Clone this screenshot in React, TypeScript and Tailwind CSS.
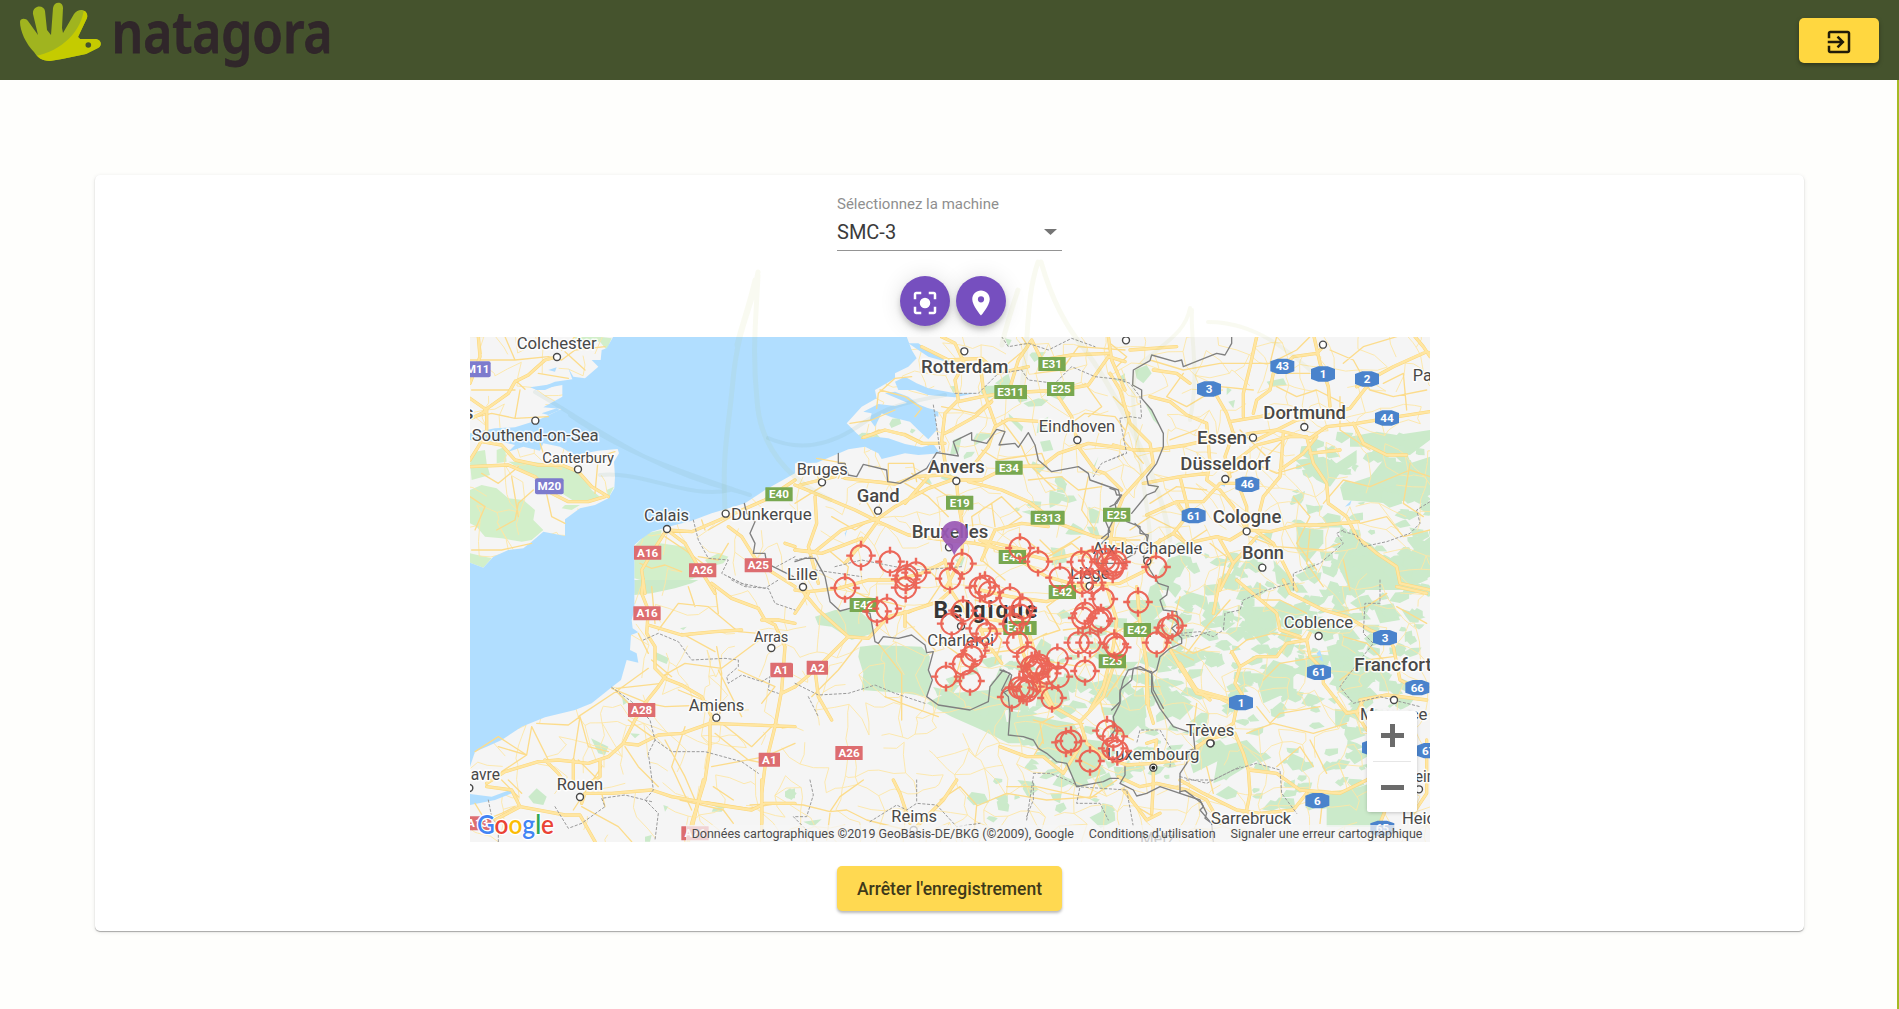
import React from "react";

type Label = [string, number, number, number, number, number];
type Shield = [string, number, number, string, number?];
type Tile = {
  x: number;
  y: number;
  green?: string[];
  water?: string[];
  road?: string;
  motorway?: string;
  border?: string;
  dashed?: string;
  labels?: Label[];
  dots?: [number, number][];
  shields?: Shield[];
};

/* Map sections. Each has an origin on the map and is drawn in thirds of a pixel. */
const tiles: Tile[] = [
  {
    x: 465, y: 330,
    green: [
      "M15 480 50 465 95 475 130 505 175 510 210 540 205 570 235 600 200 630 170 635 110 625 60 620 35 590 15 580Z",
      "M15 670 60 680 80 685 55 713 15 698Z",
      "M15 400 30 365 60 360 65 400 75 435 20 450Z", "M95 360 120 350 125 395 95 400Z",
      "M130 395 200 395 300 408 345 430 380 480 410 505 330 515 290 490 230 460 190 430Z",
      "M300 525 345 525 320 540 290 535Z", "M320 20 400 20 440 25 425 60 405 35 350 35Z", "M425 480 447 470 430 505Z",
      "M508 650 545 610 590 600 585 640 660 650 690 690 700 740 630 765 560 760 508 745Z",
      "M720 690 760 670 790 680 775 700 735 710Z",
    ],
    water: [
      "M445 20 990 20 990 430 900 480 840 520 740 550 680 572 610 590 560 605 525 630 508 645 508 790 15 790 15 698 55 713 85 680 130 660 175 655 200 635 235 605 300 618 300 568 345 535 390 525 430 505 448 475 450 440 447 395 462 370 458 357 400 362 330 375 285 350 235 340 225 362 175 350 130 365 150 345 110 335 15 330 15 310 90 295 150 292 220 270 290 237 235 232 292 200 292 165 210 180 270 155 322 148 310 115 325 140 360 145 400 110 380 90 407 90 410 60 425 55Z",
      "M250 120 275 112 270 125Z", "M195 172 290 158 240 180 215 180Z", "M230 250 275 235 285 240 250 255Z",
    ],
    road: "M15 90 150 90 250 80 290 90 330 60 420 50M150 90 120 20M220 130 310 145M20 180 150 180M150 150 180 178M15 265 80 250 150 265 250 260M165 180 150 265M330 20 290 60M15 120 60 125M300 65 360 120M20 660 110 660 200 640M50 430 100 460 160 410M95 600 150 570 160 520 205 480M140 440 160 560M240 470 260 560 300 580M390 490 400 380 450 365M225 340 235 370M30 600 60 530 15 500M525 700 560 715 600 705 650 725M700 680 760 690 790 640M600 620 660 660 740 720M730 600 800 560M710 570 720 600",
    motorway: "M40 20 45 80 15 160M15 205 65 240 65 300 40 350 15 390M15 410 130 405 210 440 260 490 310 515 370 515 420 500M50 335 110 345 150 390 220 405 290 405 340 425 380 470 430 500M60 240 130 190 150 155 190 135 240 90 276 81M20 265 60 245M606 600 680 605 740 580 820 545 900 510 990 450M606 597 560 670 530 720 540 790M606 600 660 640 700 710 750 790M790 590 830 620 880 700 990 770M960 640 990 650",
    border: "M838 520 845 550 870 575 855 610 870 640 865 670 900 670 905 700 935 715 985 740",
    dashed: "M685 570 700 630 730 685 790 690 770 730 830 760 900 775 940 750M935 710 990 680M790 740 850 770",
    labels: [["Colchester",155,395,57,50,400],["Southend-on-Sea",20,401,332,50,400],["Canterbury",232,447,400,46,400],["Calais",537,672,573,50,400],["Dunkerque",798,1040,571,50,400],["Londres",-180,25,268,54,500]],
    dots: [[276,81],[211,272],[339,418],[606,597],[782,551]],
    shields: [["M11",38,118,"m",78],["M20",253,469,"m",86],["E40",942,493,"e"],["A16",548,668,"a"],["A26",713,721,"a"],["A25",880,706,"a"]],
  },
  {
    x: 795, y: 330,
    green: ["M475 330 500 320 490 370 465 375Z","M600 160 640 130 650 165 625 170Z","M640 250 685 290 680 305 645 270Z","M685 220 730 205 760 210 740 228 700 230Z","M730 275 760 260 750 300 725 310Z","M735 335 765 330 775 360 745 365Z","M790 455 815 460 810 490 785 485Z","M880 530 915 545 910 580 885 580Z","M680 545 705 540 710 555Z","M480 690 510 680 500 710Z","M960 150 990 130 990 160Z","M895 410 910 380 890 440Z","M630 25 650 30 640 50Z"],
    water: [
      "M0 20 335 20 350 60 365 85 340 110 300 130 300 145 240 180 245 205 200 230 155 280 185 310 205 328 240 320 280 325 330 342 380 352 415 342 435 370 370 375 330 370 260 387 250 370 210 350 160 358 120 375 65 398 0 400Z",
      "M205 245 250 222 300 228 350 215 400 235 420 240 425 300 400 328 370 300 345 275 290 262 260 250 240 290 225 270 230 250Z",
      "M300 155 330 140 365 160 400 175 480 190 540 190 480 202 400 195 360 180 310 180Z",
      "M270 190 300 185 340 200 380 230 430 245 430 260 380 245 330 215Z",
      "M340 40 370 40 420 75 480 90 470 100 400 80Z",
      "M150 610 158 595 150 620Z",
    ],
    road: "M245 235 250 190 300 145 350 140M255 180 330 200 380 235 360 260M165 280 230 270 300 240M200 325 250 300 330 310 400 345M130 445 150 400 65 385M280 455 280 400 355 400 365 455M0 520 80 470 60 420M140 445 270 455M110 560 180 600 240 560 200 490M330 460 400 500 460 560M350 430 430 480 520 540M560 360 610 390 740 370 760 420M620 270 680 350 700 400 780 480M540 640 530 560 620 500 680 560 620 600M800 300 870 250 960 260 990 300M870 160 920 230 880 260M720 130 800 120 850 50 990 60M440 230 540 250 600 200M640 100 700 50 680 20M680 620 760 680 830 640 900 700M880 440 860 540 900 600M700 450 800 440 850 480 920 470M590 520 600 590",
    motorway: "M0 465 60 490 180 540 260 580 340 615 450 630 540 640 660 665 760 690 990 640M0 660 60 665 140 600 250 565 300 530 400 475 484 445M15 465 75 450 120 440M150 445 300 462 360 440 440 435 484 445M484 445 490 520 505 600 500 680 450 780M505 500 500 550M484 450 560 450 640 410 740 408 790 370 880 340 990 355M520 455 620 480 700 515 790 580 900 620 990 630M470 420 540 400 580 350 600 290 640 268 740 275 790 300M455 430 440 330 450 250 490 210 480 150 508 100 480 40 440 20M490 215 560 200 620 190 800 180 880 165 940 80 990 95M555 90 565 180 600 280M640 190 670 90 710 30 740 90 830 75 940 70M790 200 830 260 850 350 900 420 930 430 980 480M450 310 540 260 590 215M380 50 460 90 560 85 610 130 700 110M205 322 270 300 330 315 380 340 450 340M60 500 65 580 40 650 70 760M400 440 330 520M560 690 600 600 680 580 760 590M940 20 950 90 990 180M250 570 200 640 150 700",
    border: "M130 370 130 400 150 400 160 435 185 440 205 403 275 420 278 455 315 460 395 415 425 368 490 378 475 335 530 308 530 330 575 340 605 298 630 305 612 345 660 340 670 352 700 308 720 345 730 390 770 425 850 410 880 430 885 450 970 480 975 500 960 520 965 545 930 570 945 605 920 625",
    dashed: "M415 225 425 290 435 365M480 190 550 190 610 130 680 120 700 150 780 160 830 110 900 140 990 150M620 20 640 50 700 40 760 60 830 25 900 50M895 440 920 400 990 370M0 690 50 680M60 720 200 740",
    labels: [["Rotterdam",378,640,128,56,500],["Eindhoven",731,961,306,50,400],["Bruges",5,158,434,48,400],["Anvers",398,569,428,56,500],["Gand",185,314,516,56,500],["Bruxelles",350,580,624,56,500]],
    dots: [[508,64],[847,330],[81,457],[484,453],[249,542],[462,652]],
    shields: [["E31",771,102,"e"],["E311",647,186,"e",98],["E25",797,177,"e"],["E34",642,413,"e"],["E19",494,518,"e"],["E313",758,563,"e",102],["E40",652,681,"e"]],
  },
  {
    x: 1110, y: 330,
    green: ["M75 120 110 105 125 130 100 160 80 145Z","M470 155 520 145 530 165 480 170Z","M105 220 125 240 150 290 130 270Z","M355 215 375 210 370 235Z","M350 170 365 180 350 195Z","M720 320 800 305 860 315 960 300 960 330 900 375 820 370 760 350 720 350Z","M555 390 640 380 680 400 740 360 740 400 690 430 660 470 620 450Z","M820 390 900 400 960 380 960 480 900 510 830 520 700 510 690 470 780 440Z","M560 590 640 600 640 640 590 700 560 660Z","M700 610 780 640 820 680 870 690 960 620 960 740 880 780 720 780 680 700Z","M490 690 540 740 550 780 500 760Z","M440 620 490 600 480 640Z","M180 680 220 690 200 740 175 780 130 780 150 720Z"],
    water: ["M705 530 725 510 720 525Z","M335 455 345 450 345 470 330 465Z","M430 630 437 625 440 640Z"],
    road: "M0 40 50 80 20 110M120 90 220 120 330 100 480 100 560 60 600 20M480 100 500 20M220 130 170 200 230 230 330 170 430 180M500 170 560 200 620 180 700 220M700 100 760 50 860 20M660 60 730 90 780 180 850 200 950 180M820 160 880 130 890 240M300 400 360 430 430 400 500 430 600 400M120 520 200 470 290 480M60 600 120 560 200 600 230 640 290 600M300 640 350 680 330 780M420 620 500 650 640 660 690 640M640 520 700 450 780 470 900 420 960 440M750 580 830 560 880 620 960 600M550 500 600 560 560 640 620 720M700 690 720 780M900 400 880 520 940 560M180 330 260 300 330 330M390 300 470 380 520 330M500 130 600 130M600 600 590 700 640 770M10 200 60 250 40 330 100 400M690 200 690 300 780 360",
    motorway: "M440 20 420 110 400 190 400 260M120 200 180 215 230 255 290 280 300 400 290 450 330 480 370 530 410 600M310 180 350 250 370 310 345 380 360 440M360 275 450 260 540 240 620 260 720 235 770 170M430 250 440 210 480 180 490 130 550 80 620 70 640 50M612 20 630 100 655 170 660 230M345 330 420 310 500 300 600 325 650 290 740 280 830 265 960 245M440 330 560 270 620 260M380 390 440 345 540 320 590 320M520 310 515 380 510 440 460 500 440 580M510 420 580 370 620 320M590 320 610 400 650 460 655 520 710 560 740 620 800 670 860 710 870 760 960 780M730 280 760 340 830 375 890 375M740 170 850 110 950 65 960 70M915 20 940 50 960 80M410 600 480 605 560 585 640 585 745 575M440 605 490 640 520 700 560 780M410 600 360 630 320 620 230 640 190 610M120 650 190 610 230 560 200 515 280 515 330 460 440 460M60 60 200 50M100 460 210 440 290 430M210 440 240 560M10 345 70 360 130 360 230 345 340 320M0 130 30 180 60 280 120 340 130 400 40 500 20 550M325 620 370 700 330 780M370 700 440 620M110 555 200 515M600 370 690 360M130 120 200 130 240 160M380 450 410 530 410 600",
    border: "M365 20 365 40 345 75 320 70 220 110 215 90 195 95 125 75 120 92 70 120 68 165 95 180 95 205 125 240 160 310 160 350 140 400 110 440 115 465 145 470 135 485 110 495 65 550M0 475 15 480 20 495 35 495 20 520 0 530M50 575 90 590 90 610 115 615 110 640 80 650 75 670 40 690",
    dashed: "M30 265 60 260 95 265 90 200 60 160 30 150M30 270 50 370 0 390M700 605 740 615 760 650 830 635 900 610 930 580 920 540 960 515M700 600 680 610 700 640 630 700 550 730 550 780",
    labels: [["Dortmund",460,708,266,56,500],["Essen",261,411,343,56,500],["Düsseldorf",211,482,421,56,500],["Cologne",308,514,578,56,500],["Bonn",396,522,687,56,500],["Paderborn",908,1135,154,50,400]],
    dots: [[48,31],[639,44],[583,291],[429,323],[346,447],[410,604],[457,713]],
    shields: [["43",517,109,"b"],["1",639,132,"b"],["2",771,147,"b"],["3",297,177,"b"],["44",831,264,"b"],["46",412,463,"b"],["61",251,557,"b"],["E25",20,554,"e"]],
  },
  {
    x: 465, y: 580,
    green: ["M508 0 700 0 680 10 630 25 560 40 508 45Z","M570 215 612 235 605 252 575 240Z","M190 650 215 625 245 650 235 675 205 670Z","M378 475 430 500 420 525 400 520Z","M495 460 525 462 510 475Z","M470 345 490 365 475 375Z","M745 685 780 680 770 695 740 695Z","M960 635 990 625 990 655 965 655Z","M540 770 560 765 555 785 540 785Z","M645 145 665 140 655 150Z","M595 675 610 680 600 695Z"],
    water: [
      "M0 0 508 0 508 90 500 120 503 145 520 157 498 165 495 210 515 220 520 248 485 240 468 300 440 322 380 370 330 390 240 412 170 440 110 480 70 498 30 515 15 560 0 560Z",
      "M15 642 80 650 140 628 150 636 90 660 15 675Z",
    ],
    road: "M30 515 100 470 185 525 110 575M100 500 185 525 200 440M200 440 250 540M215 430 310 435 345 410 325 540M345 410 370 500 430 515M440 325 550 370 600 380 730 375M455 325 590 310M340 410 460 330 550 265M450 330 520 400M520 160 550 220M580 150 640 70 730 80 820 155 880 160M620 290 560 240M590 290 660 250 770 265 890 175M755 200 770 280 765 400M830 410 760 270M650 160 750 215M740 370 640 330M480 500 520 560 580 620M600 480 660 590 690 660M560 470 490 420M680 690 620 560 660 440M750 460 850 540 900 550M740 560 900 530 990 490M680 660 760 670 850 685 940 670M160 650 110 600M30 670 60 720 110 700 150 680M350 680 460 740 500 785M420 680 400 600 340 540M410 560 325 690M560 20 570 130M690 80 670 20M770 430 860 500 930 430M890 370 930 320 820 270M750 20 760 100M130 600 170 640",
    motorway: "M535 0 530 40 550 90 545 160 570 200 570 265 600 295 650 315 710 350 740 410 735 430 650 460 580 465 520 495 475 490 430 530 370 550 280 540 220 545 120 575 65 610M740 430 990 440M735 430 735 500 720 600 680 730 670 785M600 290 580 320 540 370 510 420 475 490M65 620 140 630 165 680 300 705 345 705 390 785M350 670 360 640 440 640 560 630 620 650M740 10 800 55 880 85 900 120 930 135 960 200 950 330 930 440 900 560 890 640 890 730M890 120 940 120 990 130M325 540 325 600M405 540 405 590 370 610M240 540 280 580 300 610M550 135 650 165 750 155 830 150M620 650 760 675 860 690 900 670 990 670M950 340 990 320M165 680 90 720",
    dashed: "M535 180 580 160 640 185 680 240 780 235 820 240 820 260 785 290 790 310 830 285 890 305 915 290 910 330 940 340M440 322 500 365 555 420 570 480 620 515 720 515 830 545 880 580M570 480 550 520 565 630 540 660 580 700 570 780M70 660 80 710 100 740 100 785M270 680 310 745 350 730 420 680 410 655 480 645 560 665M800 0 840 20 910 25 930 70 990 90",
    labels: [["Arras",867,970,185,46,400],["Amiens",671,838,392,52,400],["Rouen",275,414,629,52,400],["Le Havre",-78,105,601,50,400]],
    dots: [[919,204],[754,413],[345,651],[13,624]],
    shields: [["A16",546,100,"a"],["A28",530,390,"a"],["A1",951,271,"a",66],["A1",913,539,"a",64],["A13",38,730,"a"],["A26",690,760,"a"],["A26",1152,519,"a"]],
  },
  {
    x: 795, y: 530,
    green: ["M60 260 120 240 190 240 230 275 235 310 170 330 110 290 70 285Z","M195 350 240 345 380 350 405 380 400 420 410 460 395 500 330 490 200 480 205 430 190 380Z","M395 520 430 500 470 490 580 480 590 455 620 430 645 440 620 500 640 600 700 640 640 640 560 600 470 560Z","M555 390 620 375 620 400 580 415Z"],
    road: "M100 60 160 110 150 170 210 200 330 230M380 100 440 160 400 220 340 250M50 500 130 420 200 330M320 570 320 430 250 340M270 500 320 520 430 560M430 330 500 380 470 480M560 250 620 330 600 400M330 270 420 360M560 90 630 150M620 230 540 210",
    motorway: "M0 180 40 185 130 175 220 150 300 150 380 130 450 95M20 180 70 240 160 320 220 325 280 260 340 245 430 215 470 180 450 90M470 185 520 260 600 270 690 290M160 320 60 420 70 500 110 570M0 60 80 70 200 25M40 190 0 250M560 30 690 60M60 420 0 470M330 245 330 290M540 250 570 330 620 400",
    border: "M0 95 30 85 60 85 90 140 105 215 135 243 165 235 225 250 240 335 250 340 265 320 310 325 350 315 390 345 395 368 415 365 400 420 412 450 395 500 430 525 525 540 580 515 585 470 625 420 650 435 640 480 620 490",
    dashed: "M0 460 70 495 160 490 240 465 300 490 390 520M40 500 70 560M120 110 200 90 300 110 380 120 500 110",
    labels: [["Lille",-24,67,150,48,400],["Charleroi",397,597,347,50,400]],
    dots: [[24,171],[498,289]],
    shields: [["E42",205,225,"e"],["A2",67,413,"a",64],["A1",-42,419,"a",64]],
  },
  {
    x: 980, y: 520,
    green: ["M510 200 530 190 560 260 520 300 480 310 450 280 440 240 500 240Z","M570 120 620 130 600 170 560 180Z","M320 20 350 20 360 50 340 55Z","M20 540 60 440 100 480 150 570 10 570Z","M170 500 260 480 270 540 200 560Z","M380 460 450 470 420 550 380 540Z","M610 210 680 230 690 280 640 250Z"],
    road: "M280 200 200 260 240 330 180 350M250 330 330 320 400 340 480 300M530 330 640 400 690 380M400 350 440 440 380 530M560 380 640 420M600 230 570 340M180 420 300 440 350 400M20 400 100 390 200 340M400 60 480 60M180 60 220 100 300 50",
    motorway: "M0 60 100 110 200 170 290 195 420 190 500 150 540 60M0 210 90 230 200 245 330 200M380 200 410 300 400 380 370 500 330 570M470 200 480 310 500 430 500 550M110 300 130 400 160 480 220 570M560 370 600 440 640 500 690 540M0 330 100 330M400 0 390 80 350 180M160 380 130 290 60 280",
    border: "M465 10 500 50 505 80 490 110 510 150 535 190 565 200 560 225 540 240 550 270 590 275 595 310 575 325 605 355 605 370 570 385 540 410 530 450 515 460M400 0 385 30 385 50 355 80 350 130 440 130M515 460 480 440 460 445 455 480 420 510 420 545 395 570M515 460 520 510 550 565",
    dashed: "M605 345 640 350 690 335",
    labels: [["Aix-la-Chapelle",338,667,102,48,400],["Liège",270,388,178,48,400]],
    dots: [[502,123],[329,198]],
    shields: [["E42",247,216,"e"],["E42",472,330,"e"],["E411",120,324,"e",100],["E25",397,424,"e"]],
  },
  {
    x: 1000, y: 640,
    green: ["M25 210 110 230 220 250 250 300 320 400 230 430 190 370 130 345 90 300 25 285Z","M340 200 430 140 440 230 380 290 330 280Z","M460 180 530 150 580 200 540 240 500 220Z","M560 330 660 300 700 340 580 400Z"],
    road: "M300 180 320 260 400 300M250 250 170 260 100 240M100 350 130 300M130 310 120 250 160 230M270 470 300 390 200 340M200 460 270 475 350 420M590 190 580 270M380 450 410 500 460 530M640 270 560 370M400 140 480 140M20 440 110 440 200 460",
    motorway: "M0 320 80 350 130 350 190 400 240 320M110 100 160 200 240 245 310 170 350 50M240 245 260 310 310 350 380 375 460 370 460 430 455 520M460 370 540 360 620 300 690 280M460 370 470 300 440 310M440 90 445 200 460 250M540 70 590 150 700 180M355 410 420 440 470 430 560 450 620 480 660 550M370 450 410 500 440 540 480 520",
    border: "M0 90 30 100 20 120 5 150 25 170 30 220 25 285 70 290 100 300 115 325 140 340 170 365 200 370 215 405 230 440 310 425 330 415 355 415M405 85 385 90 370 120 360 160 360 190 340 230 345 270 330 290M455 95 405 85M375 380 375 405 360 430 400 450 410 468 440 460 480 440 540 460 540 400 560 370 570 330 585 330 580 280 520 260 480 205 455 155 455 100M540 460 600 480 610 500 600 510 630 545",
    dashed: "M100 400 150 400 200 420 240 440 230 490 300 490 325 540M230 440 380 450 400 560M510 380 515 330 480 270 420 270 410 310M560 420 640 420 720 380M80 540 100 410",
    labels: [["Luxembourg",320,598,360,50,400],["Trèves",557,703,288,50,400],["Metz",420,525,612,52,400]],
    dots: [[460,383],[632,310]],
  },
  {
    x: 1180, y: 580,
    green: ["M200 80 290 80 290 150 240 180 190 150Z","M440 200 510 180 540 220 620 260 520 370 470 330Z","M280 240 340 260 340 330 250 370 230 300Z","M120 500 200 480 250 530 150 590 100 610Z","M440 640 540 620 600 600 620 660 600 740 440 740Z","M580 80 640 70 660 120 600 130Z","M180 280 270 280 230 310Z","M60 210 120 220 100 260Z","M370 110 430 110 400 130Z"],
    water: ["M410 220 420 210 430 245 420 240Z"],
    road: "M240 10 240 60 300 60 380 100M20 220 80 140 150 60M150 220 200 180 280 160 380 180M230 380 270 430 300 400 420 380M420 230 300 250 250 300M200 460 280 430 400 460 500 430M290 560 360 500 400 560M390 480 440 580M430 640 420 730M100 640 80 560M480 300 560 240 640 230M460 100 560 80 620 40M650 80 740 130M490 170 560 190 610 240",
    motorway: "M0 260 50 340 120 355 170 380 160 430 100 470 50 500 30 520M155 215 180 260 165 310 190 350M180 260 230 230 290 230 320 190 380 180 390 160M430 90 330 40 310 0M120 0 100 100M380 180 390 230 430 270 430 310 500 400 550 390 540 360 620 345 740 360M430 90 500 110 570 150 620 170 640 200 660 300 700 320M165 460 190 520 205 570 290 580 360 630 480 640 560 600 620 560M205 570 210 640 200 690M380 640 340 690 240 700 170 690 70 640 0 600M550 360 530 400 560 450M650 20 740 40M170 0 230 50 290 100 300 150 360 170M740 480 740 640 700 700M600 730 620 680",
    border: "M0 635 15 632 40 650 65 670 80 700 75 715 95 730 100 785",
    dashed: "M0 160 60 155 100 170 130 150 135 100 180 90 190 60 260 30 330 10M600 0 600 70 555 70 550 160 580 190 540 240 480 320 520 370 600 350 720 380M0 590 80 610 160 570 230 550 300 570 305 640 350 700",
    labels: [["Coblence",311,519,144,50,400],["Francfort",523,755,273,54,500],["Mayence",540,742,420,48,400],["Mannheim",566,780,606,48,400],["Heidelberg",666,905,733,48,400],["Sarrebruck",93,334,733,50,400]],
    dots: [[416,168],[642,360],[91,490],[717,628]],
    shields: [["3",615,173,"b"],["61",417,277,"b"],["66",712,323,"b"],["1",183,368,"b"],["6",412,662,"b"],["65",607,745,"b"],["67",746,512,"b"],["",582,503,"b"]],
  },
  {
    x: 680, y: 780,
    green: ["M315 35 330 25 350 40 335 60 315 50Z","M950 65 970 52 988 75 985 95 955 90Z","M1012 0 1060 5 1075 30 1030 20Z","M1110 40 1145 40 1140 70 1120 60Z","M95 75 135 75 130 90Z","M370 125 425 118 400 140Z"],
    road: "M0 60 130 90 160 130M210 75 300 70 370 75 450 95 500 90 560 120 680 150M450 95 480 50 550 0M450 100 440 180M780 60 840 20 890 75 880 180M890 78 980 40 1100 60 1250 50M160 60 100 20",
    motorway: "M70 0 30 170M245 0 245 170M640 0 660 40 690 130M700 150 790 60 830 0",
    dashed: "M390 0 400 45 380 110 340 110 390 160M570 125 650 75 680 90 710 70 770 75 830 140 900 130M710 0 710 70M1060 10 1060 60 1040 110",
    labels: [["Reims",634,771,125,50,400]],
    dots: [[701,150]],
  },
];

const crosshairs: [number, number][] = (
  [
    [795,530,[[198,77],[285,95],[150,174],[336,137],[332,148],[363,128],[332,173],[246,244],[276,236],[501,101],[465,146],[504,242],[470,281],[555,173],[570,168],[583,187],[645,204],[555,295],[575,311],[540,362],[530,380],[505,402],[453,440],[525,453]]],
    [980,520,[[120,84],[174,125],[240,173],[304,126],[338,122],[375,118],[385,130],[400,136],[408,126],[398,145],[307,188],[335,188],[370,237],[474,246],[528,141],[315,280],[308,294],[355,303],[363,296],[127,264],[120,285],[100,312],[295,368],[330,368],[403,372],[410,382],[530,368],[565,323],[577,317],[112,368],[142,410],[232,415],[315,453],[235,470],[216,534],[95,531],[118,503],[140,513],[130,508],[155,440],[165,437],[172,448],[178,435],[160,455],[200,460],[150,500]]],
    [1000,640,[[198,307],[213,303],[270,363],[321,272],[340,289],[338,325],[352,333]]],
  ] as [number, number, [number, number][]][]
).flatMap(([ox, oy, list]) => list.map(([x, y]) => [ox + x / 3, oy + y / 3] as [number, number]));

/* Small seeded generator so that the background network is the same on every render. */
function makeRandom(seed: number) {
  let s = seed;
  return () => {
    s = (s * 1664525 + 1013904223) % 4294967296;
    return s / 4294967296;
  };
}

function localRoads() {
  const r = makeRandom(7);
  const step = 20;
  const cols = 50;
  const rows = 27;
  const pts: [number, number][][] = [];
  for (let j = 0; j < rows; j++) {
    pts.push([]);
    for (let i = 0; i < cols; i++) pts[j].push([462 + i * step + (r() - 0.5) * 16, 330 + j * step + (r() - 0.5) * 16]);
  }
  let d = "";
  const link = (a: [number, number], b: [number, number]) => {
    const mx = (a[0] + b[0]) / 2 + (r() - 0.5) * 7;
    const my = (a[1] + b[1]) / 2 + (r() - 0.5) * 7;
    d += `M${a[0].toFixed(1)} ${a[1].toFixed(1)}L${mx.toFixed(1)} ${my.toFixed(1)}L${b[0].toFixed(1)} ${b[1].toFixed(1)}`;
  };
  for (let j = 0; j < rows - 1; j++)
    for (let i = 0; i < cols - 1; i++) {
      const dense = pts[j][i][0] > 860 ? 0.56 : 0.36;
      if (r() < dense) link(pts[j][i], pts[j][i + 1]);
      if (r() < dense) link(pts[j][i], pts[j + 1][i]);
      if (r() < 0.12) link(pts[j][i], pts[j + 1][i + 1]);
    }
  return d;
}

function woods() {
  const r = makeRandom(21);
  const areas = [
    [1370, 500, 80, 75, 75], [1280, 690, 130, 130, 190], [1100, 730, 110, 60, 80], [1100, 660, 90, 60, 35],
    [1200, 600, 60, 60, 30], [1360, 610, 80, 60, 55], [1000, 690, 60, 35, 20], [1000, 460, 150, 110, 22], [1060, 800, 90, 30, 14],
  ];
  let d = "";
  for (const [cx, cy, rx, ry, n] of areas)
    for (let k = 0; k < n; k++) {
      const a = r() * 6.283;
      const q = Math.sqrt(r());
      const x = cx + Math.cos(a) * rx * q;
      const y = cy + Math.sin(a) * ry * q;
      const size = 3 + r() * 7;
      const m = 5;
      for (let v = 0; v < m; v++) {
        const t = (v / m) * 6.283 + r() * 0.9;
        const l = size * (0.45 + r() * 0.9);
        d += `${v ? "L" : "M"}${(x + Math.cos(t) * l * 1.3).toFixed(1)} ${(y + Math.sin(t) * l * 0.85).toFixed(1)}`;
      }
      d += "Z";
    }
  return d;
}

const LOCAL = localRoads();
const WOODS = woods();
const shieldColor: Record<string, string> = { m: "#7d7bcd", e: "#78a850", a: "#dd6d70", b: "#4a83cc" };

function layer(render: (t: Tile) => React.ReactNode) {
  return tiles.map((t, i) => (
    <g key={i} transform={`translate(${t.x} ${t.y}) scale(.33333)`}>{render(t)}</g>
  ));
}

function ShieldMark({ s }: { s: Shield }) {
  const [name, x, y, kind, w = kind === "b" ? 72 : 82] = s;
  const c = shieldColor[kind];
  return (
    <g>
      {kind === "b" ? (
        <path d={`M${x - 36} ${y - 15}L${x - 14} ${y - 23}H${x + 14}L${x + 36} ${y - 15}V${y + 15}L${x + 14} ${y + 23}H${x - 14}L${x - 36} ${y + 15}Z`} fill={c} />
      ) : (
        <rect x={x - w / 2} y={y - (kind === "m" ? 24 : 21)} width={w} height={kind === "m" ? 48 : 42} rx={kind === "m" ? 6 : 1} fill={c} />
      )}
      <text x={x} y={y + 12.5} textAnchor="middle" fontSize="35" fontWeight="700" fill="#fff">{name}</text>
    </g>
  );
}

function MapCanvas() {
  return (
    <svg className="block h-[505px] w-[960px]" viewBox="470 337 960 505" fontFamily="Roboto, sans-serif">
      <rect x="470" y="337" width="960" height="505" fill="#f5f5f5" />
      {layer((t) => t.green?.map((d, i) => <path key={i} d={d} fill={t.x < 600 && t.y < 400 ? "#d2efca" : "#cbeaca"} />))}
      <path d={WOODS} fill="#cbeacb" />
      <path d={LOCAL} fill="none" stroke="#fde6a6" strokeWidth="0.9" strokeLinejoin="round" />
      {layer((t) => t.water?.map((d, i) => <path key={i} d={d} fill="#b1deff" />))}
      <g fill="none" strokeLinejoin="round" strokeLinecap="round">
        {layer((t) => <path d={t.road} stroke="#fcdc8c" strokeWidth="4" />)}
        {layer((t) => <path d={t.motorway} stroke="#fbd67a" strokeWidth="10" />)}
        {layer((t) => <path d={t.motorway} stroke="#ffe6a2" strokeWidth="7" />)}
        {layer((t) => <path d={t.dashed} stroke="#9a9a9a" strokeWidth="3" strokeDasharray="7 7" />)}
        {layer((t) => <path d={t.border} stroke="#808080" strokeWidth="4" />)}
      </g>
      {layer((t) => t.dots?.map(([x, y], i) => <circle key={i} cx={x} cy={y} r="10.5" fill="#fff" stroke="#484848" strokeWidth="4.2" />))}
      <circle cx="1153.3" cy="767.7" r="2" fill="#222" />
      {layer((t) => t.shields?.map((s, i) => <ShieldMark key={i} s={s} />))}
      {layer((t) =>
        t.labels?.map(([text, x0, x1, y, size, weight]) => (
          <text key={text} x={x0} y={y} textLength={x1 - x0} lengthAdjust="spacingAndGlyphs" fontSize={size} fontWeight={weight} fill="#484848" stroke="#fff" strokeWidth="9" strokeLinejoin="round" paintOrder="stroke" strokeOpacity=".85">
            {text}
          </text>
        ))
      )}
      <text x="933.5" y="618" fontSize="23" fontWeight="700" textLength="104" fill="#363636" stroke="#fff" strokeWidth="3" strokeOpacity=".7" paintOrder="stroke">Belgique</text>
      <g fill="none" stroke="#eb5c4e" strokeWidth="2" opacity=".93">
        {crosshairs.map(([x, y], i) => (
          <g key={i} transform={`translate(${x} ${y})`}>
            <circle r="10.500" />
            <path d="M0-14.800V-7.800M0 14.800V7.800M-14.800 0H-7.800M14.800 0H7.800" strokeWidth="2.400" />
          </g>
        ))}
      </g>
      <path fillRule="evenodd" d="M954.7 521c-7.5 0-13.4 5.8-13.4 13 0 8.700 10 12 13 21.500 3-9.500 13.800-12.800 13.800-21.500 0-7.200-5.900-13-13.400-13zm0 9.200a4.200 4.200 0 1 1 0 8.400 4.200 4.200 0 0 1 0-8.400z" fill="#9a58b5" fillOpacity=".93" />
    </svg>
  );
}

function Watermark() {
  return (
    <svg className="pointer-events-none absolute inset-0 h-full w-full" viewBox="95 175 1709 756" fill="none" strokeLinecap="round">
      <g stroke="#a5b93c" strokeOpacity=".07">
        <path strokeWidth="5" d="M758 272C752 310 738 325 733 380S722 450 725 510M758 275C756 320 752 350 757 400 760 450 790 480 830 500M755 280C748 310 740 330 737 345" />
        <path strokeWidth="5" d="M1038 262C1025 300 1030 340 1020 400M1041 262C1052 300 1065 325 1085 350S1160 470 1170 540M1018 290C1008 320 1005 330 1002 345" />
        <path strokeWidth="4" d="M1190 308C1185 335 1160 345 1140 365S1150 500 1150 540M1192 310C1190 340 1200 370 1190 420M1208 322C1240 322 1270 334 1310 370" />
      </g>
      <g stroke="#6fa08b" strokeOpacity=".1" strokeWidth="4">
        <path d="M535 392C600 430 650 470 740 492M570 415C620 450 660 465 750 495M600 475C640 470 690 500 730 490M768 438C800 452 830 446 860 425S910 402 945 395" />
      </g>
    </svg>
  );
}

function Logo() {
  return (
    <svg className="h-20 w-[345px]" viewBox="0 0 345 80" role="img">
      <defs>
        <clipPath id="hand">
          <path d="M20 22C20 18 26 18 28 21L38 35 33 14C32 5 44 4 45 11L47 30 51 35 53 8C54 1 63 1 63 8L62 28 63 33 74 14C79 7 89 10 87 18L78 37 80 39 96 39C102 40 102 46 98 48L86 54 62 59 50 61C42 61 37 57 34 52 26 44 20 31 20 22Z" />
        </clipPath>
      </defs>
      <g clipPath="url(#hand)">
        <path d="M15 0H105V65H15Z" fill="#a0b41f" />
        <path d="M84 8C82 31 62 51 35 56V66H106V8Z" fill="#c5cb00" />
      </g>
      <circle cx="88.300" cy="45" r="2.800" fill="#45532d" />
      <text x="111.500" y="53" textLength="221" lengthAdjust="spacingAndGlyphs" fontFamily="'Noto Sans', sans-serif" fontSize="57" fontWeight="600" fill="#30262a" stroke="#30262a" strokeWidth=".8">natagora</text>
    </svg>
  );
}

export default function App() {
  return (
    <div className="flex h-[1009px] w-full flex-col overflow-hidden bg-[#fefefc] font-[Roboto,sans-serif]">
      <header className="flex h-20 shrink-0 items-center justify-between bg-[#45532d] pr-5">
        <Logo />
        <button className="mt-[1px] flex h-[45px] w-20 items-center justify-center rounded-[5px] bg-[#ffd740] shadow-[0_2px_4px_rgba(0,0,0,.35)]">
          <svg className="mt-[3px] size-[30px]" viewBox="0 0 24 24" fill="#201b08">
            <path d="M10.090 15.590L11.500 17l5-5-5-5-1.410 1.410L12.670 11H3v2h9.670l-2.580 2.590zM19 3H5c-1.110 0-2 .9-2 2v4h2V5h14v14H5v-4H3v4c0 1.100.89 2 2 2h14c1.100 0 2-.9 2-2V5c0-1.100-.9-2-2-2z" />
          </svg>
        </button>
      </header>
      <main className="flex-1 border-r-2 border-[#a5ba24] pl-[95px] pr-[93px] pt-[95px]">
        <section className="relative flex h-[756px] flex-col items-center rounded-[5px] bg-white shadow-[0_1px_1px_rgba(0,0,0,.3),0_1px_4px_rgba(0,0,0,.1)]">
          <div className="mt-[20px] flex h-[56px] w-[225px] flex-col border-b border-[#949494]">
            <label className="text-[15px] leading-[18px] text-[#8f8f8f]">Sélectionnez la machine</label>
            <div className="mt-[8px] flex items-center justify-between pr-[5px] text-[20px] leading-[23px] text-[#3b3b3b]">
              <span>SMC-3</span>
              <svg className="-mt-px h-[6px] w-[13px]" viewBox="0 0 13 6"><path d="M0 0H13L6.500 6Z" fill="#757575" /></svg>
            </div>
          </div>
          <div className="ml-1.5 mt-[25px] flex gap-1.5">
            <button className="flex size-[50px] items-center justify-center rounded-full bg-[#764fbf] shadow-[0_4px_6px_-1px_rgba(0,0,0,.25),0_1px_22px_rgba(0,0,0,.12)]">
              <svg className="mt-[3px] size-[30px]" viewBox="0 0 24 24" fill="#fff">
                <path d="M5 15H3v4c0 1.100.9 2 2 2h4v-2H5v-4zM5 5h4V3H5c-1.100 0-2 .9-2 2v4h2V5zm14-2h-4v2h4v4h2V5c0-1.100-.9-2-2-2zm0 16h-4v2h4c1.100 0 2-.9 2-2v-4h-2v4z" />
                <circle cx="12" cy="12" r="4.200" />
              </svg>
            </button>
            <button className="flex size-[50px] items-center justify-center rounded-full bg-[#764fbf] shadow-[0_4px_6px_-1px_rgba(0,0,0,.25),0_1px_22px_rgba(0,0,0,.12)]">
              <svg className="mt-[3px] size-[30px]" viewBox="0 0 24 24" fill="#fff">
                <path d="M12 2C8.130 2 5 5.130 5 9c0 5.250 7 13 7 13s7-7.750 7-13c0-3.870-3.130-7-7-7zm0 9.500a2.500 2.500 0 0 1 0-5 2.500 2.500 0 0 1 0 5z" />
              </svg>
            </button>
          </div>
          <div className="relative mt-[11px] h-[505px] w-[960px] overflow-hidden">
            <MapCanvas />
            <div className="absolute bottom-0 right-0 flex h-[17px] items-center gap-[15px] whitespace-nowrap bg-[#f5f5f5]/75 pl-[6px] pr-[7px] pt-[2px] text-[12.500px] text-[#4c4c4c]">
              <span>Données cartographiques ©2019 GeoBasis-DE/BKG (©2009), Google</span>
              <span>Conditions d'utilisation</span>
              <span>Signaler une erreur cartographique</span>
            </div>
            <svg className="absolute bottom-0 left-[5px] h-8 w-20" viewBox="0 0 80 32" fontFamily="Lato, sans-serif" fontWeight="600" fontSize="26">
              <text x="2" y="24" textLength="77" lengthAdjust="spacingAndGlyphs" stroke="#fff" strokeWidth="2.500" paintOrder="stroke">
                <tspan fill="#4285f4">G</tspan><tspan fill="#ea4335">o</tspan><tspan fill="#fbbc05">o</tspan><tspan fill="#4285f4">g</tspan><tspan fill="#34a853">l</tspan><tspan fill="#ea4335">e</tspan>
              </text>
            </svg>
            <div className="absolute bottom-[30px] right-[13px] flex h-[101px] w-[50px] flex-col items-center justify-between rounded-[2px] bg-white py-[13px] pl-px shadow-[0_1px_4px_-1px_rgba(0,0,0,.3)]">
              <svg className="size-[23px]" viewBox="0 0 23 23"><path d="M9 0h5v9h9v5h-9v9H9v-9H0V9h9z" fill="#6b6b6b" /></svg>
              <div className="h-px w-[38px] bg-[#e6e6e6]" />
              <svg className="size-[23px]" viewBox="0 0 23 23"><path d="M0 9h23v5H0z" fill="#6b6b6b" /></svg>
            </div>
          </div>
          <button className="mt-6 h-[45px] w-[225px] rounded-[5px] bg-[#ffd951] pt-[2px] text-[17.500px] font-medium text-[#403919] shadow-[0_2px_3px_rgba(0,0,0,.28)]">Arrêter l'enregistrement</button>
          <Watermark />
        </section>
      </main>
    </div>
  );
}
